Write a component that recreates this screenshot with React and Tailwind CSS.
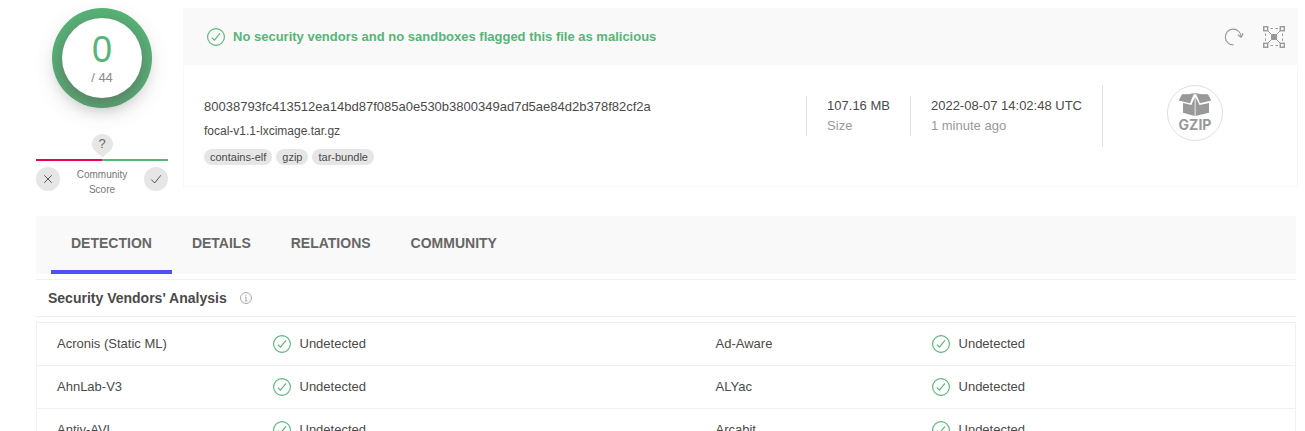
const tabs = ["Detection", "Details", "Relations", "Community"];
const tags = ["contains-elf", "gzip", "tar-bundle"];
const rows = [
  ["Acronis (Static ML)", "Ad-Aware"],
  ["AhnLab-V3", "ALYac"],
  ["Antiy-AVL", "Arcabit"],
];

function CheckCircle() {
  return (
    <svg viewBox="0 0 18 18" className="size-[18px] shrink-0 text-[#56b577]" fill="none" stroke="currentColor" strokeWidth="1.1" aria-hidden="true">
      <circle cx="9" cy="9" r="8.400" />
      <path d="M4.800 9.600l2.600 2.600L13 5.400" />
    </svg>
  );
}

function RefreshIcon() {
  return (
    <svg viewBox="0 0 20 18" className="h-[18px] w-5" fill="none" stroke="currentColor" strokeWidth="1.1" aria-hidden="true">
      <path d="M9.500 16.900A7.900 7.900 0 1 1 17.100 8.400" />
      <path d="M13.800 6.800l3.300 2.400 1.900-3.800" strokeWidth="1.3" />
    </svg>
  );
}

function GraphIcon() {
  return (
    <svg viewBox="0 0 24 24" className="size-6" fill="none" stroke="currentColor" aria-hidden="true">
      <g strokeWidth="1.4">
        <rect x="1.700" y="1.700" width="4" height="4" />
        <rect x="18.300" y="1.700" width="4" height="4" />
        <rect x="1.700" y="18.300" width="4" height="4" />
        <rect x="18.300" y="18.300" width="4" height="4" />
      </g>
      <path d="M8.500 3.500h2.500M13.500 3.500H16M8.500 20.500h2.500M13.500 20.500H16M3.500 8.500V11M3.500 13.500V16M20.500 8.500V11M20.500 13.500V16M5.600 5.600l12.800 12.800M18.400 5.600L5.600 18.400" />
      <rect x="9" y="9" width="6" height="6" fill="currentColor" stroke="none" />
    </svg>
  );
}

function BoxIcon() {
  return (
    <svg viewBox="0 0 34 24" className="h-6 w-[34px] shrink-0" fill="currentColor" aria-hidden="true">
      <path d="M4 1.300L15.800 1 12 10.300.7 7.600z" />
      <path d="M30 1.300L18.200 1 22 10.300l11.300-2.700z" />
      <path d="M5 10l8.400 2L16.700 4.200V23L5 19.800z" />
      <path d="M31 10l-9.400 2L17.500 4.200V23L31 19.800z" />
      <path d="M11 1.200Q17-.8 23 1.200z" />
    </svg>
  );
}

function Verdict() {
  return (
    <span className="flex items-center gap-[9px]">
      <CheckCircle />
      Undetected
    </span>
  );
}

export default function App() {
  return (
    <div className="h-screen overflow-y-auto bg-white pt-2 pl-9 font-['Liberation_Sans',Arial,sans-serif] text-[13px] leading-5 text-[#4a4a4a] [scrollbar-width:none]">
      <header className="flex gap-[15px] pr-[7px]">
        <section className="flex w-[132px] shrink-0 flex-col items-center" aria-label="Score">
          <div className="flex size-[100px] items-center justify-center rounded-full bg-[#56b577]">
            <div className="flex size-20 flex-col items-center rounded-full bg-white pt-[14px] shadow-[0_7px_22px_rgba(95,85,90,0.7)]">
              <div className="text-[36px] leading-9 text-[#56b577]">0</div>
              <div className="text-[#8a8a8a]">/ 44</div>
            </div>
          </div>
          <div className="relative mt-[26px] h-[25px] w-[21px]">
            <svg viewBox="0 0 21 25" className="absolute inset-0 size-full" fill="#e6e6e6" aria-hidden="true">
              <path d="M10.500 0C16.500 0 21 4.500 21 10.200 21 16 14.500 19.500 10.500 23.500 6.500 19.500 0 16 0 10.200 0 4.500 4.500 0 10.500 0z" />
            </svg>
            <span className="absolute inset-0 text-center text-[13px] text-[#666]">?</span>
          </div>
          <div className="flex h-[2px] w-full">
            <div className="flex-1 bg-[#eb0050]" />
            <div className="flex-1 bg-[#56b577]" />
          </div>
          <div className="mt-[6px] flex w-full justify-between">
            <button type="button" aria-label="Vote malicious" className="flex size-6 items-center justify-center rounded-full bg-[#e6e6e6]">
              <svg viewBox="0 0 24 24" className="size-6" fill="none" stroke="#555" aria-hidden="true">
                <path d="M8.300 8.300l7.400 7.400M15.700 8.300l-7.400 7.400" />
              </svg>
            </button>
            <p className="w-16 text-center text-[10px] leading-[15px] text-[#777]">Community Score</p>
            <button type="button" aria-label="Vote harmless" className="flex size-6 items-center justify-center rounded-full bg-[#e6e6e6]">
              <svg viewBox="0 0 24 24" className="size-6" fill="none" stroke="#555" aria-hidden="true">
                <path d="M7.200 12.500l3.500 3.500L16.800 8.300" />
              </svg>
            </button>
          </div>
        </section>

        <section className="flex min-w-0 flex-1 flex-col self-start">
          <div className="flex h-[57px] items-center bg-[#f9f9f9] pr-3 pl-6 text-[#56b577]">
            <CheckCircle />
            <p className="ml-2 flex-1 font-bold">No security vendors and no sandboxes flagged this file as malicious</p>
            <div className="flex items-center gap-[18px] text-[#999]">
              <button type="button" aria-label="Reanalyze"><RefreshIcon /></button>
              <button type="button" aria-label="Open in graph"><GraphIcon /></button>
            </div>
          </div>
          <div className="flex items-start border border-t-0 border-[#f7f7f7] px-5 pt-5 pb-[21px]">
            <div className="min-w-0 flex-1 pt-3">
              <div className="truncate">80038793fc413512ea14bd87f085a0e530b3800349ad7d5ae84d2b378f82cf2a</div>
              <div className="mt-1 text-[12px] leading-5">focal-v1.1-lxcimage.tar.gz</div>
              <div className="mt-2 flex gap-1">
                {tags.map((tag) => (
                  <a key={tag} href="#" className="rounded-full bg-[#e6e6e6] px-[6px] text-[11px] leading-4">{tag}</a>
                ))}
              </div>
            </div>
            <div className="mt-[11px] border-l border-[#e0e0e0] px-5">
              <div>107.16 MB</div>
              <div className="text-[#999]">Size</div>
            </div>
            <div className="mt-[11px] border-l border-[#e0e0e0] px-5">
              <div>2022-08-07 14:02:48 UTC</div>
              <div className="text-[#999]">1 minute ago</div>
            </div>
            <div className="flex h-[62px] items-start border-l border-[#e0e0e0] pr-[54px] pl-16">
              <div className="flex size-14 flex-col items-center rounded-full border border-[#e0e0e0] pt-[7px] text-[#999]">
                <BoxIcon />
                <div className="font-['Inter',sans-serif] text-[14px] leading-4 font-bold">GZIP</div>
              </div>
            </div>
          </div>
        </section>
      </header>

      <main className="mt-[19px] pr-[9px]">
        <nav className="flex h-[58px] bg-[#f9f9f9] pl-[15px] text-[14px] font-bold text-[#666] uppercase">
          {tabs.map((tab, i) => (
            <a
              key={tab}
              href="#"
              className={i === 0 ? "flex items-center border-b-4 border-[#4d50f5] px-5" : "flex items-center border-b-4 border-transparent px-5"}
            >
              {tab}
            </a>
          ))}
        </nav>

        <div className="mt-[5px] flex h-[38px] items-center gap-[13px] border-y border-[#f0f0f0] pl-3">
          <h2 className="text-[14px] font-bold">Security Vendors' Analysis</h2>
          <svg viewBox="0 0 12 12" className="size-3" fill="none" stroke="#aaa" aria-hidden="true">
            <circle cx="6" cy="6" r="5.500" />
            <path d="M6 2.500v1.300M5 5h1v3.800M4.800 9h2.600" />
          </svg>
        </div>

        <table className="mt-[5px] w-full table-fixed border-collapse border border-[#f0f0f0] text-left">
          <colgroup>
            <col className="w-[236px]" />
            <col className="w-[33.6%]" />
            <col className="w-[236px]" />
            <col />
          </colgroup>
          <tbody>
            {rows.map(([left, right]) => (
              <tr key={left} className="h-[43px] border-b border-[#f0f0f0]">
                <td className="pl-5">{left}</td>
                <td><Verdict /></td>
                <td className="pl-5">{right}</td>
                <td><Verdict /></td>
              </tr>
            ))}
          </tbody>
        </table>
      </main>
    </div>
  );
}
